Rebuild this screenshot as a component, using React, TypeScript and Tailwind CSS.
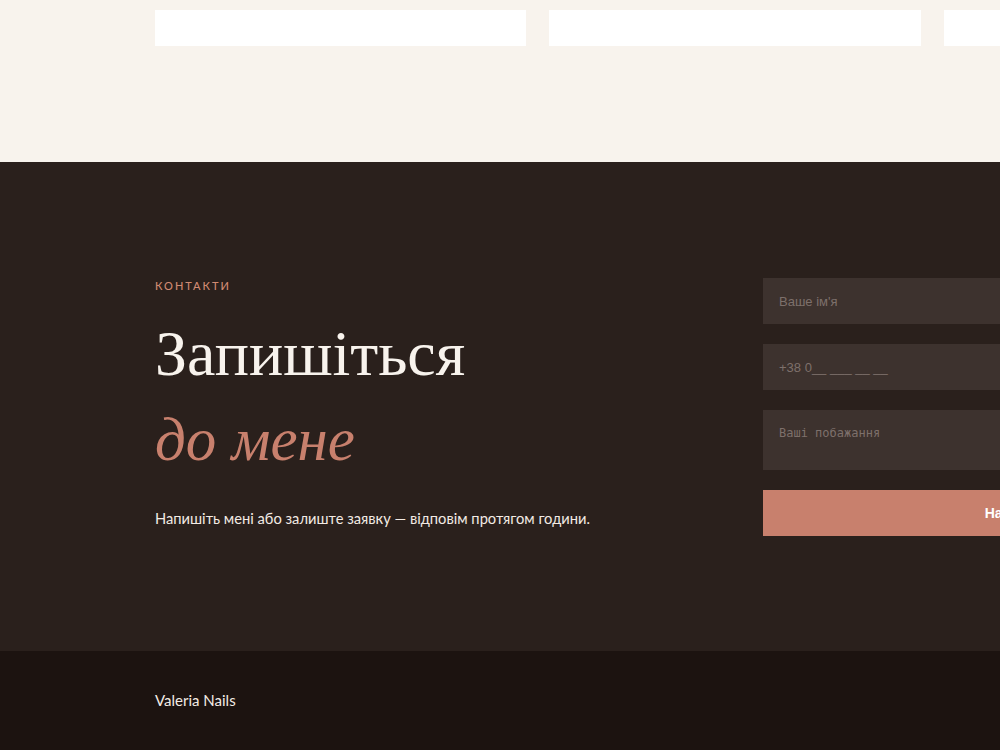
export default function App() {
  return (
    <div className="min-h-screen w-[1000px] overflow-hidden bg-[#1c1310]">
      <section className="h-[162px] bg-[#f8f3ed] pl-[155px] pt-[10px]">
        <div className="flex w-[1160px] gap-[23px]">
          <div className="h-[36px] flex-1 bg-white" />
          <div className="h-[36px] flex-1 bg-white" />
          <div className="h-[36px] flex-1 bg-white" />
        </div>
      </section>

      <section className="h-[489px] bg-[#2a201c] pl-[155px] pt-[116px]">
        <div className="grid w-[1172px] grid-cols-[552px_564px] gap-[56px]">
          <div>
            <div className="font-['Lato',sans-serif] text-[11px] font-medium uppercase tracking-[2px] text-[#d08a72]">
              Контакти
            </div>
            <h2 className="mt-[24px] font-['Liberation_Serif',serif] text-[64px] font-normal leading-[70px] text-[#f8f3ed]">
              Запишіться
            </h2>
            <div className="mt-[19px] font-['Liberation_Serif',serif] text-[61px] italic leading-[64px] text-[#c8806d]">
              до мене
            </div>
            <p className="mt-[35px] font-['Lato',sans-serif] text-[14.7px] text-[#f3ebe4]">
              Напишіть мені або залиште заявку — відповім протягом години.
            </p>
          </div>

          <form className="flex flex-col gap-[20px]">
            <input
              className="h-[46px] bg-[#3d322e] px-[16px] font-['Liberation_Sans',sans-serif] text-[13px] text-white outline-none placeholder:text-[#7d706b]"
              placeholder="Ваше ім'я"
            />
            <input
              className="h-[46px] bg-[#3d322e] px-[16px] font-['Liberation_Sans',sans-serif] text-[13px] text-white outline-none placeholder:text-[#7d706b]"
              placeholder="+38 0__ ___ __ __"
            />
            <textarea
              className="h-[60px] resize-none bg-[#3d322e] px-[16px] py-[14px] font-['DejaVu_Sans_Mono',monospace] text-[12px] text-white outline-none placeholder:text-[#7d706b]"
              placeholder="Ваші побажання"
            />
            <button
              type="button"
              className="h-[46px] bg-[#c8806d] font-['Liberation_Sans',sans-serif] text-[14px] font-bold text-white"
            >
              Надіслати заявку
            </button>
          </form>
        </div>
      </section>

      <footer className="h-[99px] bg-[#1c1310] pl-[155px] pt-[38px]">
        <div className="font-['Lato',sans-serif] text-[15px] text-[#f3ebe4]">Valeria Nails</div>
      </footer>
    </div>
  );
}
